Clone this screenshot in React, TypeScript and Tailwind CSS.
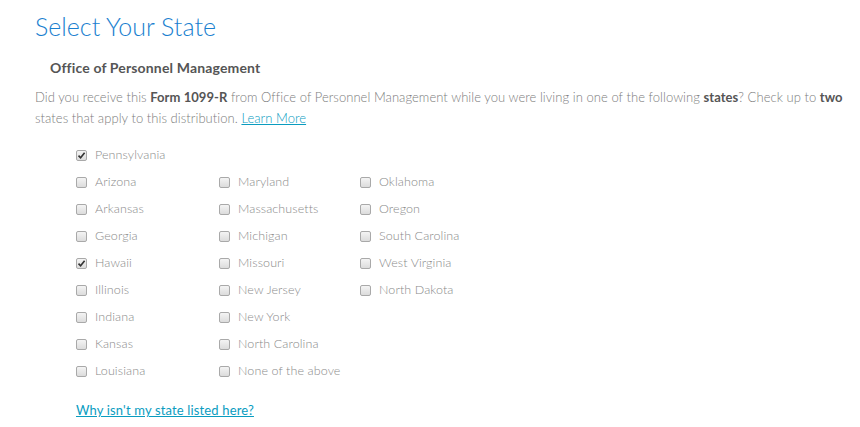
const col1 = ["Arizona", "Arkansas", "Georgia", "Hawaii", "Illinois", "Indiana", "Kansas", "Louisiana"];
const col2 = ["Maryland", "Massachusetts", "Michigan", "Missouri", "New Jersey", "New York", "North Carolina", "None of the above"];
const col3 = ["Oklahoma", "Oregon", "South Carolina", "West Virginia", "North Dakota"];

const checked = ["Pennsylvania", "Hawaii"];

function Box({ on }: { on: boolean }) {
	return (
		<span className="flex h-[11px] w-[11px] shrink-0 items-center justify-center rounded-[2px] border border-[#a9a9a9] bg-gradient-to-b from-[#f4f4f4] to-[#dcdcdc]">
			{on && (
				<svg width="9" height="9" viewBox="0 0 9 9">
					<path d="M1.5 4.6 L3.6 6.8 L7.6 1.8" fill="none" stroke="#333" strokeWidth="1.6" />
				</svg>
			)}
		</span>
	);
}

function StateOption({ name }: { name: string }) {
	return (
		<label className="flex h-[27px] items-center gap-[8px]">
			<Box on={checked.includes(name)} />
			<span className="text-[12.5px] font-light tracking-[0.1px] text-[#8a8a8a]">{name}</span>
		</label>
	);
}

function Column({ items }: { items: string[] }) {
	return (
		<div className="flex flex-col">
			{items.map((s) => (
				<StateOption key={s} name={s} />
			))}
		</div>
	);
}

export default function App() {
	return (
		<div className="min-h-[427px] w-[860px] bg-white pl-[35px] pt-[10px] font-['Lato','Liberation_Sans',sans-serif]">
			<h1 className="text-[25px] leading-[32px] font-light text-[#1a7fcf]">Select Your State</h1>
			<h2 className="mt-[15px] pl-[15px] text-[14px] font-bold tracking-[0.15px] text-[#555]">Office of Personnel Management</h2>
			<p className="mt-[9px] w-[815px] text-[13px] leading-[21px] font-light tracking-[0.05px] text-[#7d7d7d]">
				Did you receive this <b className="font-bold text-[#555]">Form 1099-R</b> from Office of Personnel Management while you were living in one of the following{" "}
				<b className="font-bold text-[#555]">states</b>? Check up to <b className="font-bold text-[#555]">two</b> states that apply to this distribution.{" "}
				<a className="text-[#0a9cbf] underline">Learn More</a>
			</p>
			<div className="mt-[13px] pl-[41px]">
				<StateOption name="Pennsylvania" />
				<div className="grid grid-cols-[143px_141px_200px]">
					<Column items={col1} />
					<Column items={col2} />
					<Column items={col3} />
				</div>
				<a className="mt-[16px] block text-[13px] tracking-[0.15px] text-[#0a9cbf] underline">Why isn't my state listed here?</a>
			</div>
		</div>
	);
}
